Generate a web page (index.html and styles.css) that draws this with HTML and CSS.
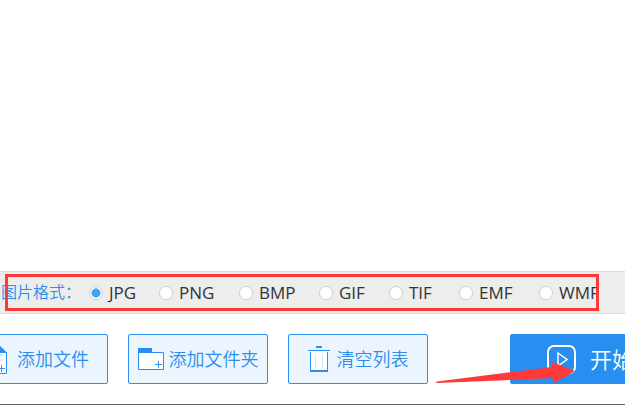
FILE: index.html
```html
<!DOCTYPE html>
<html lang="zh-CN">
<head>
	<meta charset="utf-8">
	<title>图片格式</title>
	<link rel="stylesheet" href="styles.css">
</head>
<body>
	<!-- file list, empty -->
	<main class="file-list"></main>

	<!-- output format -->
	<div class="formats" role="radiogroup" aria-labelledby="formatsTitle">
		<span class="formats-title" id="formatsTitle">图片格式：</span>
		<div class="options">
			<label><input type="radio" name="format" value="jpg" checked>JPG</label>
			<label><input type="radio" name="format" value="png">PNG</label>
			<label><input type="radio" name="format" value="bmp">BMP</label>
			<label><input type="radio" name="format" value="gif">GIF</label>
			<label><input type="radio" name="format" value="tif">TIF</label>
			<label><input type="radio" name="format" value="emf">EMF</label>
			<label><input type="radio" name="format" value="wmf">WMF</label>
		</div>
		<div class="highlight"></div>
	</div>

	<!-- actions -->
	<div class="toolbar">
		<button type="button" class="btn btn-file">
			<svg width="24" height="30" viewBox="0 0 24 30">
				<path d="M1.500 .5H15L23.500 9V29.500H1.500Z" fill="#fff" stroke="#288ff0"/>
				<path d="M15 0L24 9H15Z" fill="#288ff0"/>
				<path d="M5 11h15M5 16h15" stroke="#d5e8fa" stroke-width="2"/>
				<path d="M15 24.500h7M18.500 21v7" stroke="#288ff0"/>
			</svg>
			<span>添加文件</span>
		</button>
		<button type="button" class="btn">
			<svg width="26" height="22" viewBox="0 0 26 22">
				<path d="M.5 4.500H25.500V21.500H.5Z" fill="#fff" stroke="#288ff0"/>
				<path d="M0 0h14v5H0z" fill="#288ff0"/>
				<path d="M17 16.500h7M20.500 13v7" stroke="#288ff0"/>
			</svg>
			<span>添加文件夹</span>
		</button>
		<button type="button" class="btn btn-clear">
			<svg width="22" height="26" viewBox="0 0 22 26">
				<path d="M2.500 6V25H19.500V6" fill="#fff" stroke="#288ff0"/>
				<path d="M8 0h6v2H8zM0 4h22v1H0zM2 24h18v2H2z" fill="#288ff0"/>
				<path d="M7.500 9v12M14.500 9v12" stroke="#cfe4f9"/>
			</svg>
			<span>清空列表</span>
		</button>
		<button type="button" class="start">
			<svg width="29" height="29" viewBox="0 0 29 29" fill="none" stroke="#fff" stroke-width="2">
				<rect x="1" y="1" width="27" height="27" rx="6"/>
				<path d="M11 8L20 14.500L11 21Z" stroke-width="1.500"/>
			</svg>
			<span>开始</span>
		</button>
		<svg class="arrow" width="140" height="22" viewBox="0 0 140 22">
			<path d="M1 19.500Q-1 20 1 21L118 16V21L139 9L116 0V5Z" fill="#ff3838"/>
		</svg>
	</div>
</body>
</html>
```
FILE: styles.css
```css
* {
	box-sizing: border-box;
}

body {
	display: flex;
	flex-direction: column;
	min-height: 100vh;
	margin: 0;
	overflow: hidden;
	background: #fff;
	border-bottom: 1px solid #666;
	font-family: "Open Sans", "Noto Sans CJK SC", sans-serif;
}

.file-list {
	flex: 1;
}

/* format row */
.formats {
	position: relative;
	display: flex;
	align-items: center;
	padding: 9px 0;
	border: solid #dcdcdc;
	border-width: 1px 0;
	background: #ededed;
	font-size: 16px;
	line-height: 23px;
}

.formats-title {
	flex-shrink: 0;
	width: 89px;
	padding-left: 1px;
	color: #288ff0;
	font-weight: 350;
	white-space: nowrap;
}

.options {
	display: grid;
	grid-template-columns: 70px 80px 80px 70px 70px 80px auto;
	color: #333;
	font-size: 17px;
}

.options label {
	display: flex;
	align-items: center;
	gap: 6px;
}

.options input {
	appearance: none;
	width: 14px;
	height: 14px;
	margin: 0;
	border: 1px solid #d0d0d0;
	border-radius: 50%;
	background: #fff;
}

.options input:checked {
	background: radial-gradient(circle, #40a5f3 4px, #fff 5px);
}

/* red frame around the formats */
.highlight {
	position: absolute;
	top: 2px;
	right: 26px;
	bottom: 2px;
	left: 5px;
	border: 3px solid #ff3838;
	pointer-events: none;
}

/* buttons */
.toolbar {
	position: relative;
	display: flex;
	gap: 20px;
	margin-left: -32px;
	padding: 20px 0;
}

.toolbar button {
	display: flex;
	flex-shrink: 0;
	align-items: center;
	height: 50px;
	border: 1px solid #288ff0;
	border-radius: 2px;
	font-family: inherit;
	font-weight: 350;
	line-height: 24px;
	white-space: nowrap;
}

.toolbar svg {
	flex-shrink: 0;
}

.btn {
	justify-content: center;
	gap: 5px;
	width: 140px;
	padding: 0;
	background: #ecf5fd;
	color: #288ff0;
	font-size: 18px;
}

.btn-file {
	gap: 10px;
	padding-right: 4px;
}

.btn-clear {
	gap: 7px;
}

.toolbar .start {
	gap: 14px;
	width: 180px;
	margin-left: 62px;
	padding: 0 36px;
	background: #288ff0;
	color: #fff;
	font-size: 22px;
}

.arrow {
	position: absolute;
	right: 49px;
	bottom: 20px;
}
```
